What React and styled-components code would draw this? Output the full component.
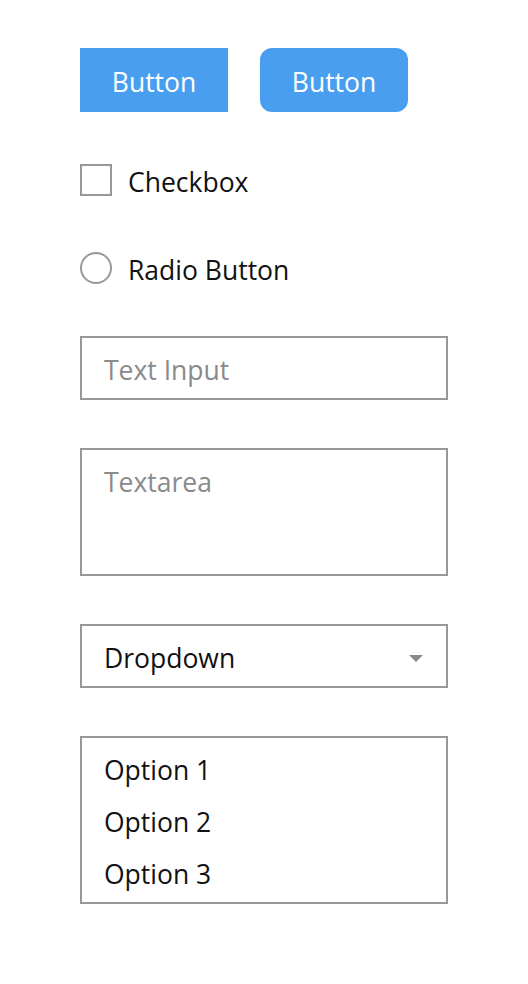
import styled, { createGlobalStyle } from "styled-components";

const GlobalStyle = createGlobalStyle`
  body {
    margin: 0;
    background: #ffffff;
    font-family: "Open Sans", "Noto Sans", sans-serif;
    color: #111111;
  }
  * {
    box-sizing: border-box;
  }
`;

// styled components
const Page = styled.div`
  display: flex;
  flex-direction: column;
  gap: 48px;
  padding: 48px 80px;
`;

const ButtonRow = styled.div`
  display: flex;
  gap: 32px;
`;

const Button = styled.button`
  width: 148px;
  height: 64px;
  padding: 4px 0 0;
  border: none;
  border-radius: ${(p) => (p.$rounded ? "12px" : "0")};
  background: #499ef0;
  color: #ffffff;
  font-family: inherit;
  font-size: 26.5px;
  cursor: pointer;
`;

const ChoiceRow = styled.label`
  display: flex;
  align-items: center;
  gap: 16px;
  height: 40px;
  font-size: 26.5px;
`;

const ChoiceText = styled.span`
  padding-top: 4px;
`;

const Choice = styled.input`
  appearance: none;
  width: 32px;
  height: 32px;
  margin: 0;
  border: 2px solid #999999;
  border-radius: ${(p) => (p.type === "radio" ? "50%" : "0")};
  background: #ffffff;
`;

const fieldBase = `
  display: block;
  width: 368px;
  margin: 0;
  padding: 4px 22px 0;
  border: 2px solid #999999;
  border-radius: 0;
  background: #ffffff;
  font-family: inherit;
  font-size: 26.5px;
  color: #111111;
  outline: none;
  &::placeholder {
    color: #8a8a8a;
  }
`;

const TextInput = styled.input`
  ${fieldBase}
  height: 64px;
`;

const TextArea = styled.textarea`
  ${fieldBase}
  height: 128px;
  padding-top: 14px;
  line-height: 36px;
  resize: none;
`;

const SelectWrap = styled.div`
  position: relative;
  width: 368px;
`;

const Select = styled.select`
  ${fieldBase}
  appearance: none;
  height: 64px;
`;

const Caret = styled.svg`
  position: absolute;
  right: 25px;
  top: 31px;
  pointer-events: none;
`;

const ListBox = styled.ul`
  width: 368px;
  height: 168px;
  margin: 0;
  padding: 6px 0 0;
  list-style: none;
  border: 2px solid #999999;
`;

const ListOption = styled.li`
  height: 52px;
  padding: 0 22px;
  line-height: 52px;
  font-size: 26.5px;
`;

const options = ["Option 1", "Option 2", "Option 3"];

// main component
const App = () => {
  return (
    <>
      <GlobalStyle />
      <Page>
        <ButtonRow>
          <Button>Button</Button>
          <Button $rounded>Button</Button>
        </ButtonRow>
        <ChoiceRow>
          <Choice type="checkbox" />
          <ChoiceText>Checkbox</ChoiceText>
        </ChoiceRow>
        <ChoiceRow>
          <Choice type="radio" name="radio" />
          <ChoiceText>Radio Button</ChoiceText>
        </ChoiceRow>
        <TextInput type="text" placeholder="Text Input" />
        <TextArea placeholder="Textarea" />
        <SelectWrap>
          <Select defaultValue="dropdown">
            <option value="dropdown">Dropdown</option>
          </Select>
          <Caret width="14" height="7" viewBox="0 0 14 7">
            <path d="M0 0h14L7 7z" fill="#8a8a8a" />
          </Caret>
        </SelectWrap>
        <ListBox>
          {options.map((option) => (
            <ListOption key={option}>{option}</ListOption>
          ))}
        </ListBox>
      </Page>
    </>
  );
};

export default App;
